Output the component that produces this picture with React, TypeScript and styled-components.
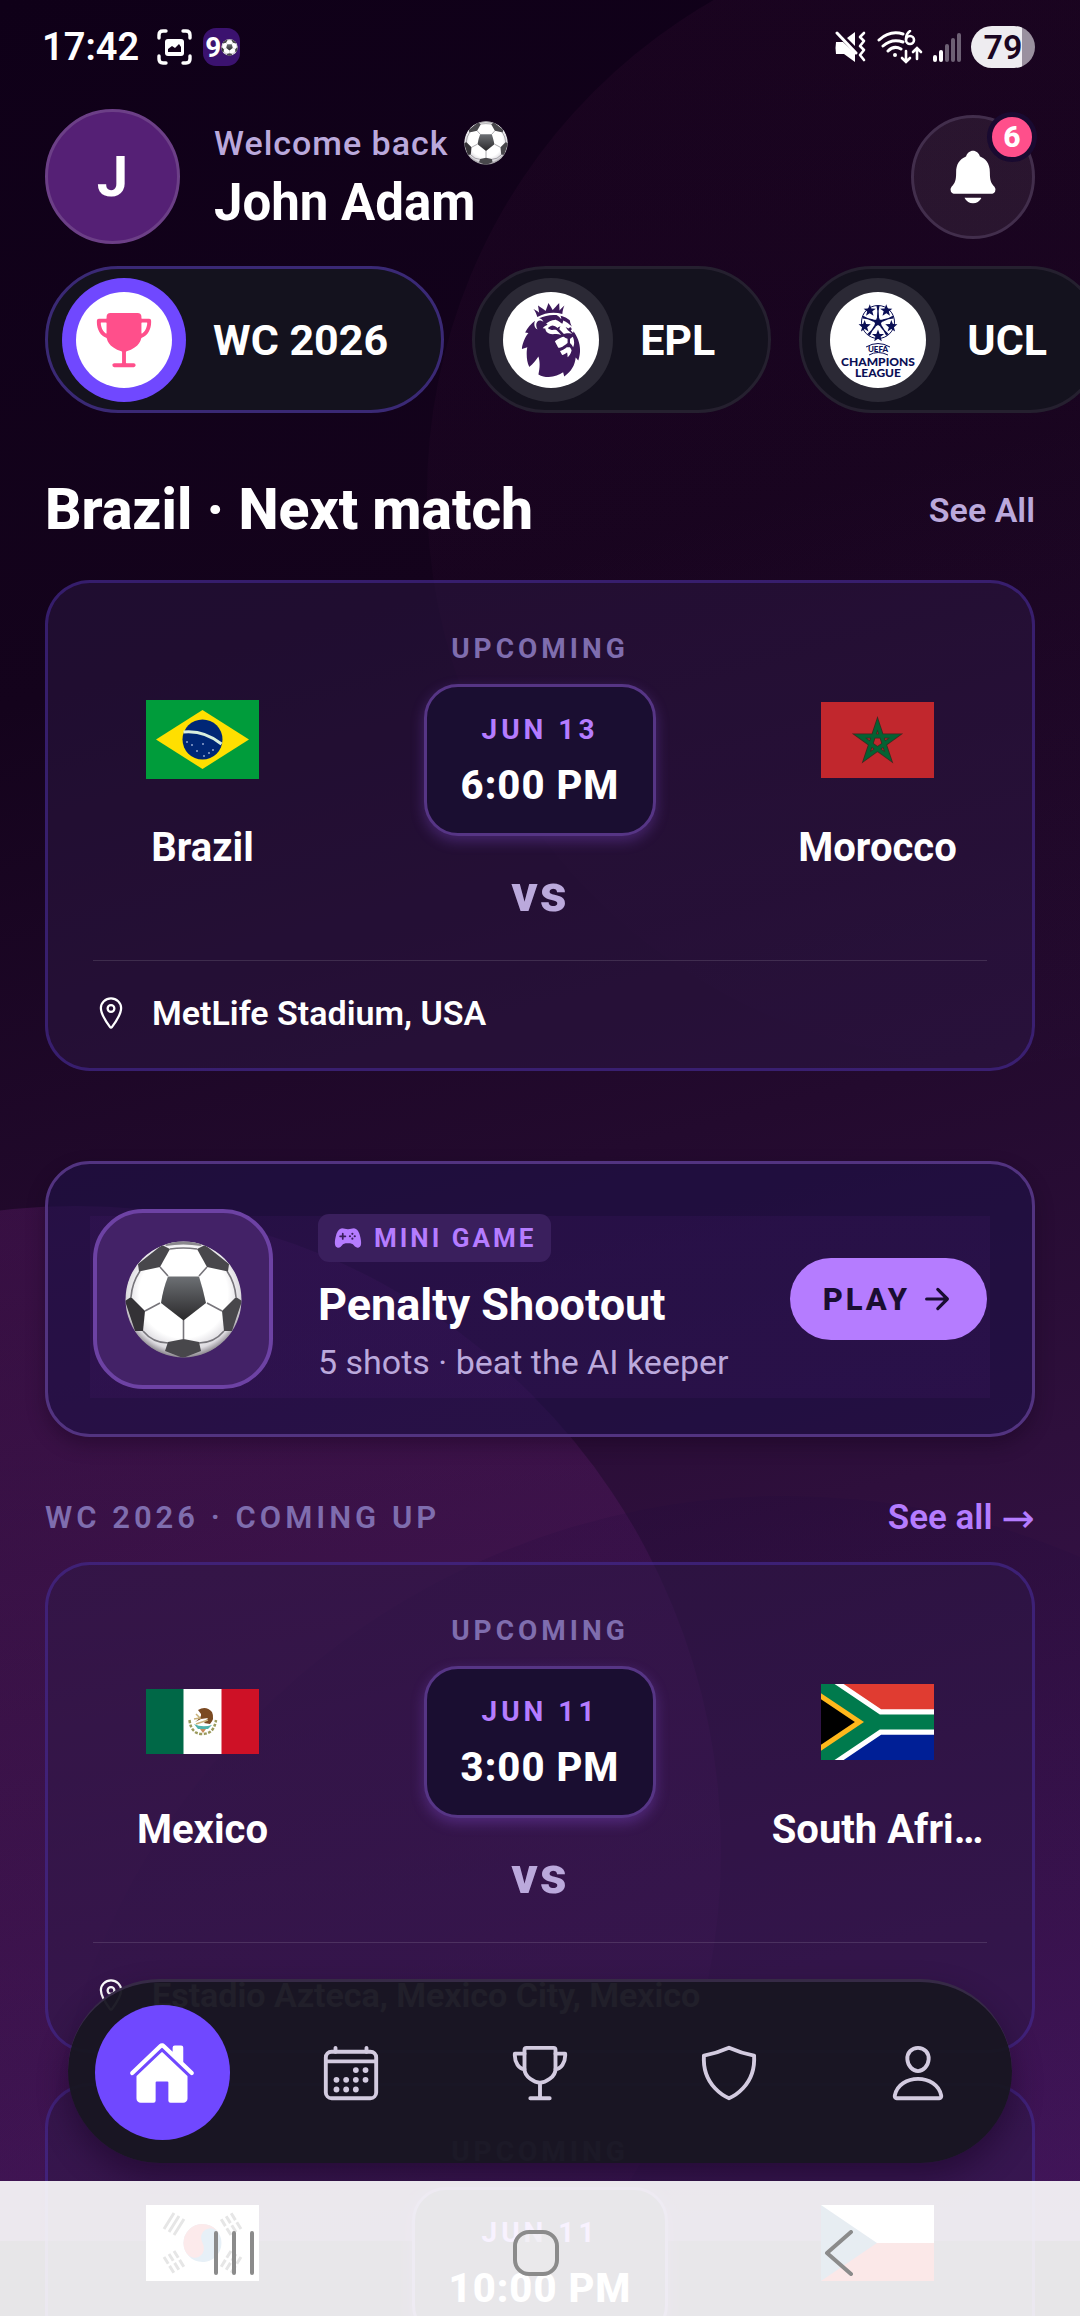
import React, { useId } from "react";
import styled, { createGlobalStyle, css } from "styled-components";
import {
  IoArrowForward,
  IoCalendarOutline,
  IoGameController,
  IoHome,
  IoLocationOutline,
  IoNotifications,
  IoPersonOutline,
  IoShieldOutline,
  IoTrophy,
  IoTrophyOutline,
} from "react-icons/io5";
import { SiPremierleague } from "react-icons/si";

const colors = {
  text: "#ffffff",
  soft: "#bba9dc",
  muted: "#7f6dae",
  accent: "#b57cff",
  primary: "#7048ff",
  pink: "#ff4f8b",
  ink: "#1a0e31",
};

const GlobalStyle = createGlobalStyle`
  * {
    box-sizing: border-box;
  }

  body {
    margin: 0;
    background: #0f0018;
    color: ${colors.text};
    font-family: Roboto, "Liberation Sans", sans-serif;
  }

  h1, h2, h3, p {
    margin: 0;
  }

  button {
    margin: 0;
    padding: 0;
    border: 0;
    background: none;
    color: inherit;
    font: inherit;
    cursor: pointer;
  }

  a {
    color: inherit;
    text-decoration: none;
  }

  svg {
    display: block;
    flex: none;
  }
`;

const Screen = styled.div`
  position: relative;
  height: 100vh;
  overflow: hidden;
`;

const Backdrop = styled.div`
  position: absolute;
  inset: 0 0 75px;
  overflow: hidden;
  background: linear-gradient(165deg, #0f0018 0%, #14031c 28%, #230a2e 52%, #2e0f3c 68%, #43165c 100%);
`;

const Orb = styled.div`
  position: absolute;
  border-radius: 50%;
`;

const OrbTop = styled(Orb)`
  top: -75px;
  right: -485px;
  width: 1138px;
  height: 1138px;
  background: linear-gradient(rgba(110, 30, 90, 0.1), rgba(60, 20, 90, 0.02));
`;

const OrbLeft = styled(Orb)`
  bottom: -255px;
  left: -569px;
  width: 1290px;
  height: 1290px;
  background: linear-gradient(rgba(140, 40, 155, 0.21), rgba(110, 30, 120, 0.1) 70%);
`;

const OrbBottom = styled(Orb)`
  bottom: -745px;
  left: 40px;
  width: 1490px;
  height: 1490px;
  background: linear-gradient(rgba(30, 8, 60, 0.18), rgba(60, 16, 80, 0.12) 50%);
`;

const Main = styled.main`
  position: relative;
  height: 100%;
  overflow-y: auto;
  scrollbar-width: none;
`;

const StatusBar = styled.div`
  display: flex;
  align-items: center;
  height: 94px;
  padding: 0 45px 0 42px;
`;

const Clock = styled.span`
  margin-right: 18px;
  font-size: 38px;
  font-weight: 600;
  line-height: 48px;
`;

const AppBadge = styled.span`
  display: flex;
  align-items: center;
  width: 37px;
  height: 38px;
  margin-left: 11px;
  padding-left: 2px;
  border-radius: 13px;
  background: #3b126f;
  font-size: 28px;
  font-weight: 700;
`;

const StatusIcons = styled.div`
  display: flex;
  align-items: center;
  gap: 10px;
  margin-left: auto;
`;

const Battery = styled.span`
  display: flex;
  align-items: center;
  justify-content: center;
  width: 64px;
  height: 42px;
  border-radius: 21px;
  background: linear-gradient(90deg, #eeecf0 79%, #9a909f 79%);
  color: #1b0622;
  font-size: 34px;
  font-weight: 600;
  line-height: 42px;
`;

const Header = styled.header`
  display: flex;
  align-items: center;
  gap: 34px;
  padding: 15px 45px 0;
`;

const Avatar = styled.div`
  display: flex;
  align-items: center;
  justify-content: center;
  width: 135px;
  height: 135px;
  border: 3px solid #6c3f87;
  border-radius: 50%;
  background: #552075;
  font-size: 56px;
  font-weight: 700;
`;

const Greeting = styled.div`
  flex: 1;
`;

const Welcome = styled.p`
  display: flex;
  align-items: center;
  gap: 15px;
  color: ${colors.soft};
  font-size: 34px;
  font-weight: 500;
  letter-spacing: 1px;
  line-height: 44px;
`;

const UserName = styled.h1`
  margin-top: 8px;
  font-size: 51px;
  font-weight: 700;
  line-height: 60px;
`;

const BellButton = styled.button`
  position: relative;
  display: flex;
  align-items: center;
  justify-content: center;
  width: 124px;
  height: 124px;
  border: 3px solid #422e4c;
  border-radius: 50%;
  background: rgba(255, 255, 255, 0.07);
`;

const BellCount = styled.span`
  position: absolute;
  top: -6px;
  right: -5px;
  width: 50px;
  height: 50px;
  border: 5px solid #190a30;
  border-radius: 50%;
  background: ${colors.pink};
  font-size: 30px;
  font-weight: 800;
  line-height: 40px;
  text-align: center;
`;

const Chips = styled.div`
  display: flex;
  gap: 28px;
  margin-top: 22px;
  padding: 0 45px;
  overflow: hidden;
`;

const Chip = styled.button<{ $active?: boolean }>`
  display: flex;
  flex: none;
  align-items: center;
  gap: 27px;
  height: 147px;
  padding: 0 53px 0 14px;
  border: 3px solid ${({ $active }) => ($active ? "#3a2975" : "#25202f")};
  border-radius: 74px;
  background: #14121e;
  font-size: 43px;
  font-weight: 700;
`;

const ChipRing = styled.span<{ $active?: boolean }>`
  display: flex;
  width: 124px;
  height: 124px;
  padding: 14px;
  border-radius: 50%;
  background: ${({ $active }) => ($active ? colors.primary : "#2b2935")};
`;

const ChipDisc = styled.span`
  display: flex;
  flex: 1;
  align-items: center;
  justify-content: center;
  border-radius: 50%;
  background: #ffffff;
  overflow: hidden;
`;

const SectionHead = styled.div<{ $compact?: boolean }>`
  display: flex;
  align-items: center;
  justify-content: space-between;
  ${({ $compact }) =>
    $compact
      ? css`
          padding: 61px 45px 24px;
        `
      : css`
          padding: 64px 45px 37px;
        `}
`;

const SectionTitle = styled.h2`
  font-size: 57px;
  font-weight: 800;
  line-height: 66px;
`;

const SeeAll = styled.a`
  color: ${colors.soft};
  font-size: 34px;
  font-weight: 600;
  line-height: 40px;
`;

const Eyebrow = styled.h2`
  color: ${colors.muted};
  font-size: 31px;
  font-weight: 600;
  letter-spacing: 4px;
  line-height: 40px;
`;

const SeeAllAccent = styled(SeeAll)`
  display: flex;
  align-items: center;
  gap: 9px;
  color: ${colors.accent};
  font-size: 35px;
`;

const ArrowGlyph = styled.span`
  font-family: "DejaVu Sans", sans-serif;
  font-size: 40px;
  font-weight: 400;
`;

const MatchCard = styled.article`
  margin: 0 45px 30px;
  padding: 48px 45px 35px;
  border: 3px solid rgba(76, 45, 168, 0.5);
  border-radius: 45px;
  background: rgba(45, 26, 72, 0.48);
`;

const Teams = styled.div`
  display: grid;
  grid-template-columns: 219px 1fr 219px;
  align-items: center;
`;

const Team = styled.div`
  min-width: 0;
  padding-top: 2px;
  text-align: center;
`;

const FlagBox = styled.div`
  display: flex;
  align-items: center;
  justify-content: center;
  height: 113px;
`;

const TeamName = styled.h3`
  margin-top: 28px;
  font-size: 40px;
  font-weight: 700;
  line-height: 48px;
  white-space: nowrap;
`;

const Center = styled.div`
  display: flex;
  flex-direction: column;
  align-items: center;
`;

const Status = styled.p`
  color: ${colors.muted};
  font-size: 28px;
  font-weight: 700;
  letter-spacing: 4px;
  line-height: 36px;
`;

const TimeBox = styled.div`
  margin-top: 17px;
  padding: 25px 34px 23px;
  border: 3px solid #563585;
  border-radius: 34px;
  background: ${colors.ink};
  box-shadow: 0 5px 14px rgba(150, 90, 240, 0.3);
  text-align: center;
`;

const Day = styled.p`
  color: ${colors.accent};
  font-size: 28px;
  font-weight: 700;
  letter-spacing: 4px;
  line-height: 36px;
`;

const Kickoff = styled.p`
  margin-top: 14px;
  font-size: 40px;
  font-weight: 800;
  letter-spacing: 1px;
  line-height: 48px;
`;

const Versus = styled.p`
  margin-top: 30px;
  color: ${colors.soft};
  font-size: 52px;
  font-weight: 800;
  letter-spacing: 2px;
  line-height: 56px;
`;

const Venue = styled.p`
  display: flex;
  align-items: center;
  gap: 23px;
  margin-top: 38px;
  padding-top: 32px;
  border-top: 1px solid rgba(255, 255, 255, 0.12);
  font-size: 34px;
  font-weight: 600;
  line-height: 40px;
`;

const GameCard = styled.section`
  display: flex;
  align-items: center;
  gap: 45px;
  margin: 90px 45px 0;
  padding: 45px;
  border: 3px solid #523380;
  border-radius: 45px;
  background:
    linear-gradient(rgba(90, 30, 130, 0.12), rgba(90, 30, 130, 0.12)) 42px 52px / calc(100% - 84px) 182px no-repeat,
    rgba(31, 17, 70, 0.66);
  box-shadow: 0 8px 18px rgba(16, 0, 24, 0.35);
`;

const GameTile = styled.div`
  display: flex;
  flex: none;
  align-items: center;
  justify-content: center;
  width: 180px;
  height: 180px;
  border: 4px solid #6d42a4;
  border-radius: 50px;
  background: #432267;
`;

const GameInfo = styled.div`
  display: flex;
  flex: 1;
  flex-direction: column;
  align-items: flex-start;
  padding-bottom: 2px;
`;

const Tag = styled.span`
  display: flex;
  align-items: center;
  gap: 12px;
  height: 48px;
  padding: 0 15px 0 16px;
  border-radius: 11px;
  background: #3a1f5d;
  color: ${colors.accent};
  font-size: 26px;
  font-weight: 700;
  letter-spacing: 3px;
`;

const GameTitle = styled.h3`
  margin-top: 16px;
  font-size: 45px;
  font-weight: 700;
  line-height: 54px;
`;

const GameText = styled.p`
  margin-top: 10px;
  color: ${colors.soft};
  font-size: 34px;
  line-height: 40px;
`;

const PlayButton = styled.button`
  display: flex;
  align-items: center;
  gap: 10px;
  height: 82px;
  padding: 0 33px;
  border-radius: 41px;
  background: ${colors.accent};
  color: ${colors.ink};
  font-size: 31px;
  font-weight: 800;
  letter-spacing: 3px;
`;

const TabBar = styled.nav`
  position: absolute;
  right: 68px;
  bottom: 153px;
  left: 68px;
  display: grid;
  grid-template-columns: repeat(5, 1fr);
  place-items: center;
  height: 184px;
  border-top: 3px solid rgba(62, 48, 80, 0.8);
  border-radius: 92px;
  background: rgba(24, 22, 33, 0.96);
  box-shadow: 0 14px 30px rgba(20, 0, 30, 0.45);
`;

const Tab = styled.button<{ $active?: boolean }>`
  display: flex;
  align-items: center;
  justify-content: center;
  width: 135px;
  height: 135px;
  border-radius: 50%;
  background: ${({ $active }) => ($active ? colors.primary : "transparent")};
  color: ${({ $active }) => ($active ? "#ffffff" : "#d3cbe0")};
`;

const SystemBar = styled.div`
  position: absolute;
  right: 0;
  bottom: 0;
  left: 0;
  display: grid;
  grid-template-columns: repeat(3, 1fr);
  place-items: center;
  height: 135px;
  padding: 8px 90px 0 83px;
  background: rgba(255, 255, 255, 0.9);
`;

type BallProps = { size: number };

const Ball: React.FC<BallProps> = ({ size }) => {
  const id = useId();
  return (
    <svg width={size} height={size} viewBox="0 0 117 117">
      <defs>
        <radialGradient id={`${id}w`} cx="50%" cy="45%" r="54%">
          <stop offset="0.7" stopColor="#ffffff" />
          <stop offset="0.9" stopColor="#dcdadf" />
          <stop offset="1" stopColor="#8f8b92" />
        </radialGradient>
        <linearGradient id={`${id}d`} x1="0" y1="0" x2="0" y2="1">
          <stop offset="0" stopColor="#6d7074" />
          <stop offset="1" stopColor="#2a292b" />
        </linearGradient>
        <clipPath id={`${id}c`}>
          <circle cx="58.5" cy="58.5" r="58" />
        </clipPath>
      </defs>
      <g clipPath={`url(#${id}c)`}>
        <circle cx="58.5" cy="58.5" r="58.5" fill={`url(#${id}w)`} />
        <g fill="none" stroke="#77757b" strokeWidth="1.6">
          <path d="M35 26 43 35M82 26 74 35M35 62 20 70M82 62 97 70M58.5 79V98M45 8Q58 6 72 8" />
          <path d="M15 30Q7 42 6 56M102 30Q110 42 111 56M18 90Q28 102 43 102M99 90Q89 102 74 102" />
        </g>
        <path d="M43 35.500H74Q78 48 81 62L58.500 79.500 36 62Q38 48 43 35.500Z" fill={`url(#${id}d)`} />
        <g fill="#48474b">
          <path d="M13 23 37 4 45 8 35 26 14 30.500Z" />
          <path d="M104 23 80 4 72 8 82 26 103 30.500Z" />
          <path d="M39 2Q58 -3 78 2L76 5Q58 2 41 5Z" fill="#8a888d" />
          <path d="M0 60 6 56 20 70 18 90H10Z" fill="#343236" />
          <path d="M117 60 111 56 97 70 99 90H107Z" />
          <path d="M43 101 58.500 98 74 101 76 110 58 117 40 110Z" />
        </g>
      </g>
    </svg>
  );
};

const BrazilFlag: React.FC = () => (
  <svg width="113" height="79" viewBox="0 0 113 79">
    <path fill="#009c3b" d="M0 0H113V79H0z" />
    <path fill="#ffdf00" d="M10 39.500 56.500 10 103 39.500 56.500 69z" />
    <circle cx="56.500" cy="39.500" r="20" fill="#002776" />
    <path d="M37.500 32Q58 30 75.500 44" fill="none" stroke="#d8eedd" strokeWidth="3" />
    <g fill="#8fa4d0">
      <circle cx="46" cy="45" r="1" />
      <circle cx="51" cy="51" r="1" />
      <circle cx="57" cy="44" r="1" />
      <circle cx="63" cy="53" r="1" />
      <circle cx="67" cy="50" r="1" />
      <circle cx="58" cy="56" r="1" />
      <circle cx="41" cy="42" r="1" />
    </g>
  </svg>
);

const MoroccoFlag: React.FC = () => (
  <svg width="113" height="76" viewBox="0 0 113 76">
    <path fill="#c1272d" d="M0 0H113V76H0z" />
    <path
      d="M56.500 22 67.500 55 38.500 34H74.500L45.500 55z"
      fill="none"
      stroke="#3f2a20"
      strokeWidth="5"
    />
    <path d="M56.500 22 67.500 55 38.500 34H74.500L45.500 55z" fill="none" stroke="#046233" strokeWidth="3.400" />
  </svg>
);

const MexicoFlag: React.FC = () => (
  <svg width="113" height="65" viewBox="0 0 113 65">
    <path fill="#006847" d="M0 0H38V65H0z" />
    <path fill="#ffffff" d="M37.500 0H76V65H37.500z" />
    <path fill="#ce1126" d="M75.500 0H113V65H75.500z" />
    <path d="M43.500 31Q45 45 56.500 45T70 31" fill="none" stroke="#9a9a5c" strokeWidth="2.500" strokeDasharray="3 1.500" />
    <path d="M52 21Q60 16 66 23 69 30 64 35L58 34 62 29 55 30 49 33Q56 28 55 25Z" fill="#7b4a22" />
    <path d="M50 25 54 29 48 30M50 35 62 31" stroke="#c9b27a" strokeWidth="1.500" fill="none" />
    <path d="M48 35Q56 39 66 36L62 40H52Z" fill="#4fb3ad" />
    <path d="M54 40H60L57 44Z" fill="#c98b5c" />
  </svg>
);

const SouthAfricaFlag: React.FC = () => (
  <svg width="113" height="76" viewBox="0 0 90 60" preserveAspectRatio="none">
    <defs>
      <clipPath id="za-hoist">
        <path d="M0 0V60L45 30z" />
      </clipPath>
    </defs>
    <path fill="#e03c31" d="M0 0H90V30H0z" />
    <path fill="#001f96" d="M0 30H90V60H0z" />
    <g fill="none" strokeWidth="20">
      <path d="M90 30H45L0 0M45 30 0 60" stroke="#ffffff" />
      <path d="M0 0 45 30 0 60" fill="#000000" stroke="#ffb81c" clipPath="url(#za-hoist)" />
      <path d="M0 0 45 30H90M0 60 45 30" stroke="#007a4d" strokeWidth="12" />
    </g>
  </svg>
);

const KoreaFlag: React.FC = () => (
  <svg width="113" height="76" viewBox="0 0 113 76">
    <path fill="#ffffff" d="M0 0H113V76H0z" />
    <g transform="rotate(-33 56.500 38)">
      <circle cx="56.500" cy="38" r="19" fill="#0f64a8" />
      <path d="M37.500 38a19 19 0 0 1 38 0 9.500 9.500 0 0 0-19 0 9.500 9.500 0 0 1-19 0" fill="#e22b33" />
    </g>
    <g stroke="#000000" strokeWidth="3">
      <path d="M18 24 28 8M23 27 33 11M28 30 38 14" />
      <path d="M95 24 85 8M90 27 80 11M85 30 75 14" strokeDasharray="8 2.500" />
      <path d="M18 52 28 68M23 49 33 65M28 46 38 62" strokeDasharray="8 2.500" />
      <path d="M95 52 85 68M90 49 80 65M85 46 75 62" strokeDasharray="8 2.500" />
    </g>
  </svg>
);

const CzechFlag: React.FC = () => (
  <svg width="113" height="76" viewBox="0 0 113 76">
    <path fill="#ffffff" d="M0 0H113V38H0z" />
    <path fill="#d7141a" d="M0 38H113V76H0z" />
    <path fill="#11457e" d="M0 0 56 38 0 76z" />
  </svg>
);

const STAR = "M0-10 2.600-3.200 9.500-3.100 4.100 1.300 5.900 8.100 0 4.300-5.900 8.100-4.100 1.300-9.500-3.100-2.600-3.200z";

const ChampionsLogo: React.FC = () => (
  <svg width="96" height="96" viewBox="0 0 96 96" fill="#0b0f55">
    <g transform="translate(48 30)">
      <circle r="16.500" fill="none" stroke="#0b0f55" strokeWidth="1" />
      <path d={STAR} transform="scale(0.720)" />
      {[0, 72, 144, 216, 288].map((angle) => (
        <path key={angle} d={STAR} transform={`rotate(${angle + 36}) translate(0 -14) scale(0.640) rotate(180)`} />
      ))}
      {[0, 72, 144, 216, 288].map((angle) => (
        <path key={angle} d="M-1-5Q0-11-1.500-16H1.500Q0-11 1-5z" transform={`rotate(${angle})`} />
      ))}
    </g>
    <path d="M36 55Q48 48 60 55" fill="none" stroke="#0b0f55" strokeWidth="1" />
    <path d="M39 63Q48 58 58 63" fill="none" stroke="#0b0f55" strokeWidth="1" />
    <g fontFamily="Lato, sans-serif" fontWeight="900" textAnchor="middle">
      <text x="48" y="60" fontSize="8">UEFA</text>
      <text x="48" y="74" fontSize="12">CHAMPIONS</text>
      <text x="48" y="85" fontSize="12">LEAGUE</text>
    </g>
  </svg>
);

const CaptureIcon: React.FC = () => (
  <svg width="35" height="36" viewBox="0 0 35 36" fill="none" stroke="#ffffff" strokeWidth="3.400" strokeLinecap="round">
    <path d="M2 9V6Q2 2 6 2H9M26 2H29Q33 2 33 6V9M33 27V30Q33 34 29 34H26M9 34H6Q2 34 2 30V27" />
    <rect x="8" y="10" width="19" height="17" rx="3" fill="#ffffff" stroke="none" />
    <path d="M11 23V20L15 17 18 19 22 15 24 18V23Z" fill="#14021a" stroke="none" />
  </svg>
);

const MuteIcon: React.FC = () => (
  <svg width="32" height="32" viewBox="0 0 32 32" fill="#ffffff">
    <path d="M1 11H8L20 22V31L9 23H1Q0 17 1 11ZM12 7 20 1V15Z" />
    <path d="M2 2 21 22" stroke="#ffffff" strokeWidth="3" strokeLinecap="round" />
    <path
      d="M29 2 25 6 29 10 25 15 29 19 25 24 29 29"
      fill="none"
      stroke="#ffffff"
      strokeWidth="2.600"
      strokeLinecap="round"
      strokeLinejoin="round"
    />
  </svg>
);

const WifiIcon: React.FC = () => (
  <svg width="46" height="34" viewBox="0 0 46 34" fill="none" stroke="#ffffff" strokeWidth="3" strokeLinecap="round">
    <path d="M2 10Q13 0 26 4M6 16Q15 8 26 12M11 21Q17 15 24 19" />
    <circle cx="18" cy="25" r="2" fill="#ffffff" stroke="none" />
    <circle cx="33" cy="10" r="4" strokeWidth="2.600" />
    <path d="M33 1Q29 4 29 9" strokeWidth="2.600" />
    <path d="M29 21V31M25 28 29 32 33 28M40 29V19M36 22 40 18 44 22" strokeWidth="2.600" />
  </svg>
);

const SignalIcon: React.FC = () => (
  <svg width="28" height="30" viewBox="0 0 28 30" strokeWidth="4" strokeLinecap="round">
    <path d="M2 25V28M8 20V28" stroke="#ffffff" />
    <path d="M14 14V28M20 8V28M26 3V28" stroke="#6d6074" />
  </svg>
);

type Side = { name: string; flag: React.ReactNode };
type Match = { home: Side; away: Side; day: string; time: string; venue: string };

const nextMatch: Match = {
  home: { name: "Brazil", flag: <BrazilFlag /> },
  away: { name: "Morocco", flag: <MoroccoFlag /> },
  day: "JUN 13",
  time: "6:00 PM",
  venue: "MetLife Stadium, USA",
};

const comingUp: Match[] = [
  {
    home: { name: "Mexico", flag: <MexicoFlag /> },
    away: { name: "South Africa", flag: <SouthAfricaFlag /> },
    day: "JUN 11",
    time: "3:00 PM",
    venue: "Estadio Azteca, Mexico City, Mexico",
  },
  {
    home: { name: "South Korea", flag: <KoreaFlag /> },
    away: { name: "Czechia", flag: <CzechFlag /> },
    day: "JUN 11",
    time: "10:00 PM",
    venue: "Estadio Akron, Zapopan, Mexico",
  },
];

const MAX_NAME = 11;

const shortName = (name: string) => (name.length > MAX_NAME ? `${name.slice(0, MAX_NAME - 1)}…` : name);

const MatchTile: React.FC<{ match: Match }> = ({ match }) => (
  <MatchCard>
    <Teams>
      <Team>
        <FlagBox>{match.home.flag}</FlagBox>
        <TeamName>{shortName(match.home.name)}</TeamName>
      </Team>
      <Center>
        <Status>UPCOMING</Status>
        <TimeBox>
          <Day>{match.day}</Day>
          <Kickoff>{match.time}</Kickoff>
        </TimeBox>
        <Versus>vs</Versus>
      </Center>
      <Team>
        <FlagBox>{match.away.flag}</FlagBox>
        <TeamName>{shortName(match.away.name)}</TeamName>
      </Team>
    </Teams>
    <Venue>
      <IoLocationOutline size={36} />
      {match.venue}
    </Venue>
  </MatchCard>
);

const App: React.FC = () => {
  return (
    <Screen>
      <GlobalStyle />
      <Backdrop>
        <OrbTop />
        <OrbLeft />
        <OrbBottom />
      </Backdrop>

      <Main>
        <StatusBar>
          <Clock>17:42</Clock>
          <CaptureIcon />
          <AppBadge>
            9
            <Ball size={17} />
          </AppBadge>
          <StatusIcons>
            <MuteIcon />
            <WifiIcon />
            <SignalIcon />
            <Battery>79</Battery>
          </StatusIcons>
        </StatusBar>

        <Header>
          <Avatar>J</Avatar>
          <Greeting>
            <Welcome>
              Welcome back
              <Ball size={44} />
            </Welcome>
            <UserName>John Adam</UserName>
          </Greeting>
          <BellButton aria-label="Notifications">
            <IoNotifications size={60} />
            <BellCount>6</BellCount>
          </BellButton>
        </Header>

        <Chips>
          <Chip $active>
            <ChipRing $active>
              <ChipDisc>
                <IoTrophy size={62} color={colors.pink} />
              </ChipDisc>
            </ChipRing>
            WC 2026
          </Chip>
          <Chip>
            <ChipRing>
              <ChipDisc>
                <SiPremierleague size={74} color="#3d195b" />
              </ChipDisc>
            </ChipRing>
            EPL
          </Chip>
          <Chip>
            <ChipRing>
              <ChipDisc>
                <ChampionsLogo />
              </ChipDisc>
            </ChipRing>
            UCL
          </Chip>
        </Chips>

        <SectionHead>
          <SectionTitle>Brazil · Next match</SectionTitle>
          <SeeAll href="#matches">See All</SeeAll>
        </SectionHead>
        <MatchTile match={nextMatch} />

        <GameCard>
          <GameTile>
            <Ball size={117} />
          </GameTile>
          <GameInfo>
            <Tag>
              <IoGameController size={28} />
              MINI GAME
            </Tag>
            <GameTitle>Penalty Shootout</GameTitle>
            <GameText>5 shots · beat the AI keeper</GameText>
          </GameInfo>
          <PlayButton>
            PLAY
            <IoArrowForward size={34} />
          </PlayButton>
        </GameCard>

        <SectionHead $compact>
          <Eyebrow>WC 2026 · COMING UP</Eyebrow>
          <SeeAllAccent href="#coming-up">
            See all
            <ArrowGlyph>→</ArrowGlyph>
          </SeeAllAccent>
        </SectionHead>
        {comingUp.map((match) => (
          <MatchTile key={match.home.name} match={match} />
        ))}
      </Main>

      <TabBar>
        <Tab $active aria-label="Home">
          <IoHome size={68} />
        </Tab>
        <Tab aria-label="Calendar">
          <IoCalendarOutline size={62} />
        </Tab>
        <Tab aria-label="Competitions">
          <IoTrophyOutline size={62} />
        </Tab>
        <Tab aria-label="Teams">
          <IoShieldOutline size={62} />
        </Tab>
        <Tab aria-label="Profile">
          <IoPersonOutline size={62} />
        </Tab>
      </TabBar>

      <SystemBar>
        <button aria-label="Recent apps">
          <svg width="42" height="46" viewBox="0 0 42 46" stroke="#8b8b8b" strokeWidth="4" strokeLinecap="round">
            <path d="M3 3V43M21 3V43M39 3V43" />
          </svg>
        </button>
        <button aria-label="Home screen">
          <svg width="46" height="46" viewBox="0 0 46 46" fill="rgba(235, 235, 235, 0.500)" stroke="#8b8b8b" strokeWidth="4">
            <rect x="2" y="2" width="42" height="42" rx="14" />
          </svg>
        </button>
        <button aria-label="Back">
          <svg
            width="30"
            height="46"
            viewBox="0 0 30 46"
            fill="none"
            stroke="#8b8b8b"
            strokeWidth="4"
            strokeLinecap="round"
            strokeLinejoin="round"
          >
            <path d="M27 2 3 23 27 44" />
          </svg>
        </button>
      </SystemBar>
    </Screen>
  );
};

export default App;
